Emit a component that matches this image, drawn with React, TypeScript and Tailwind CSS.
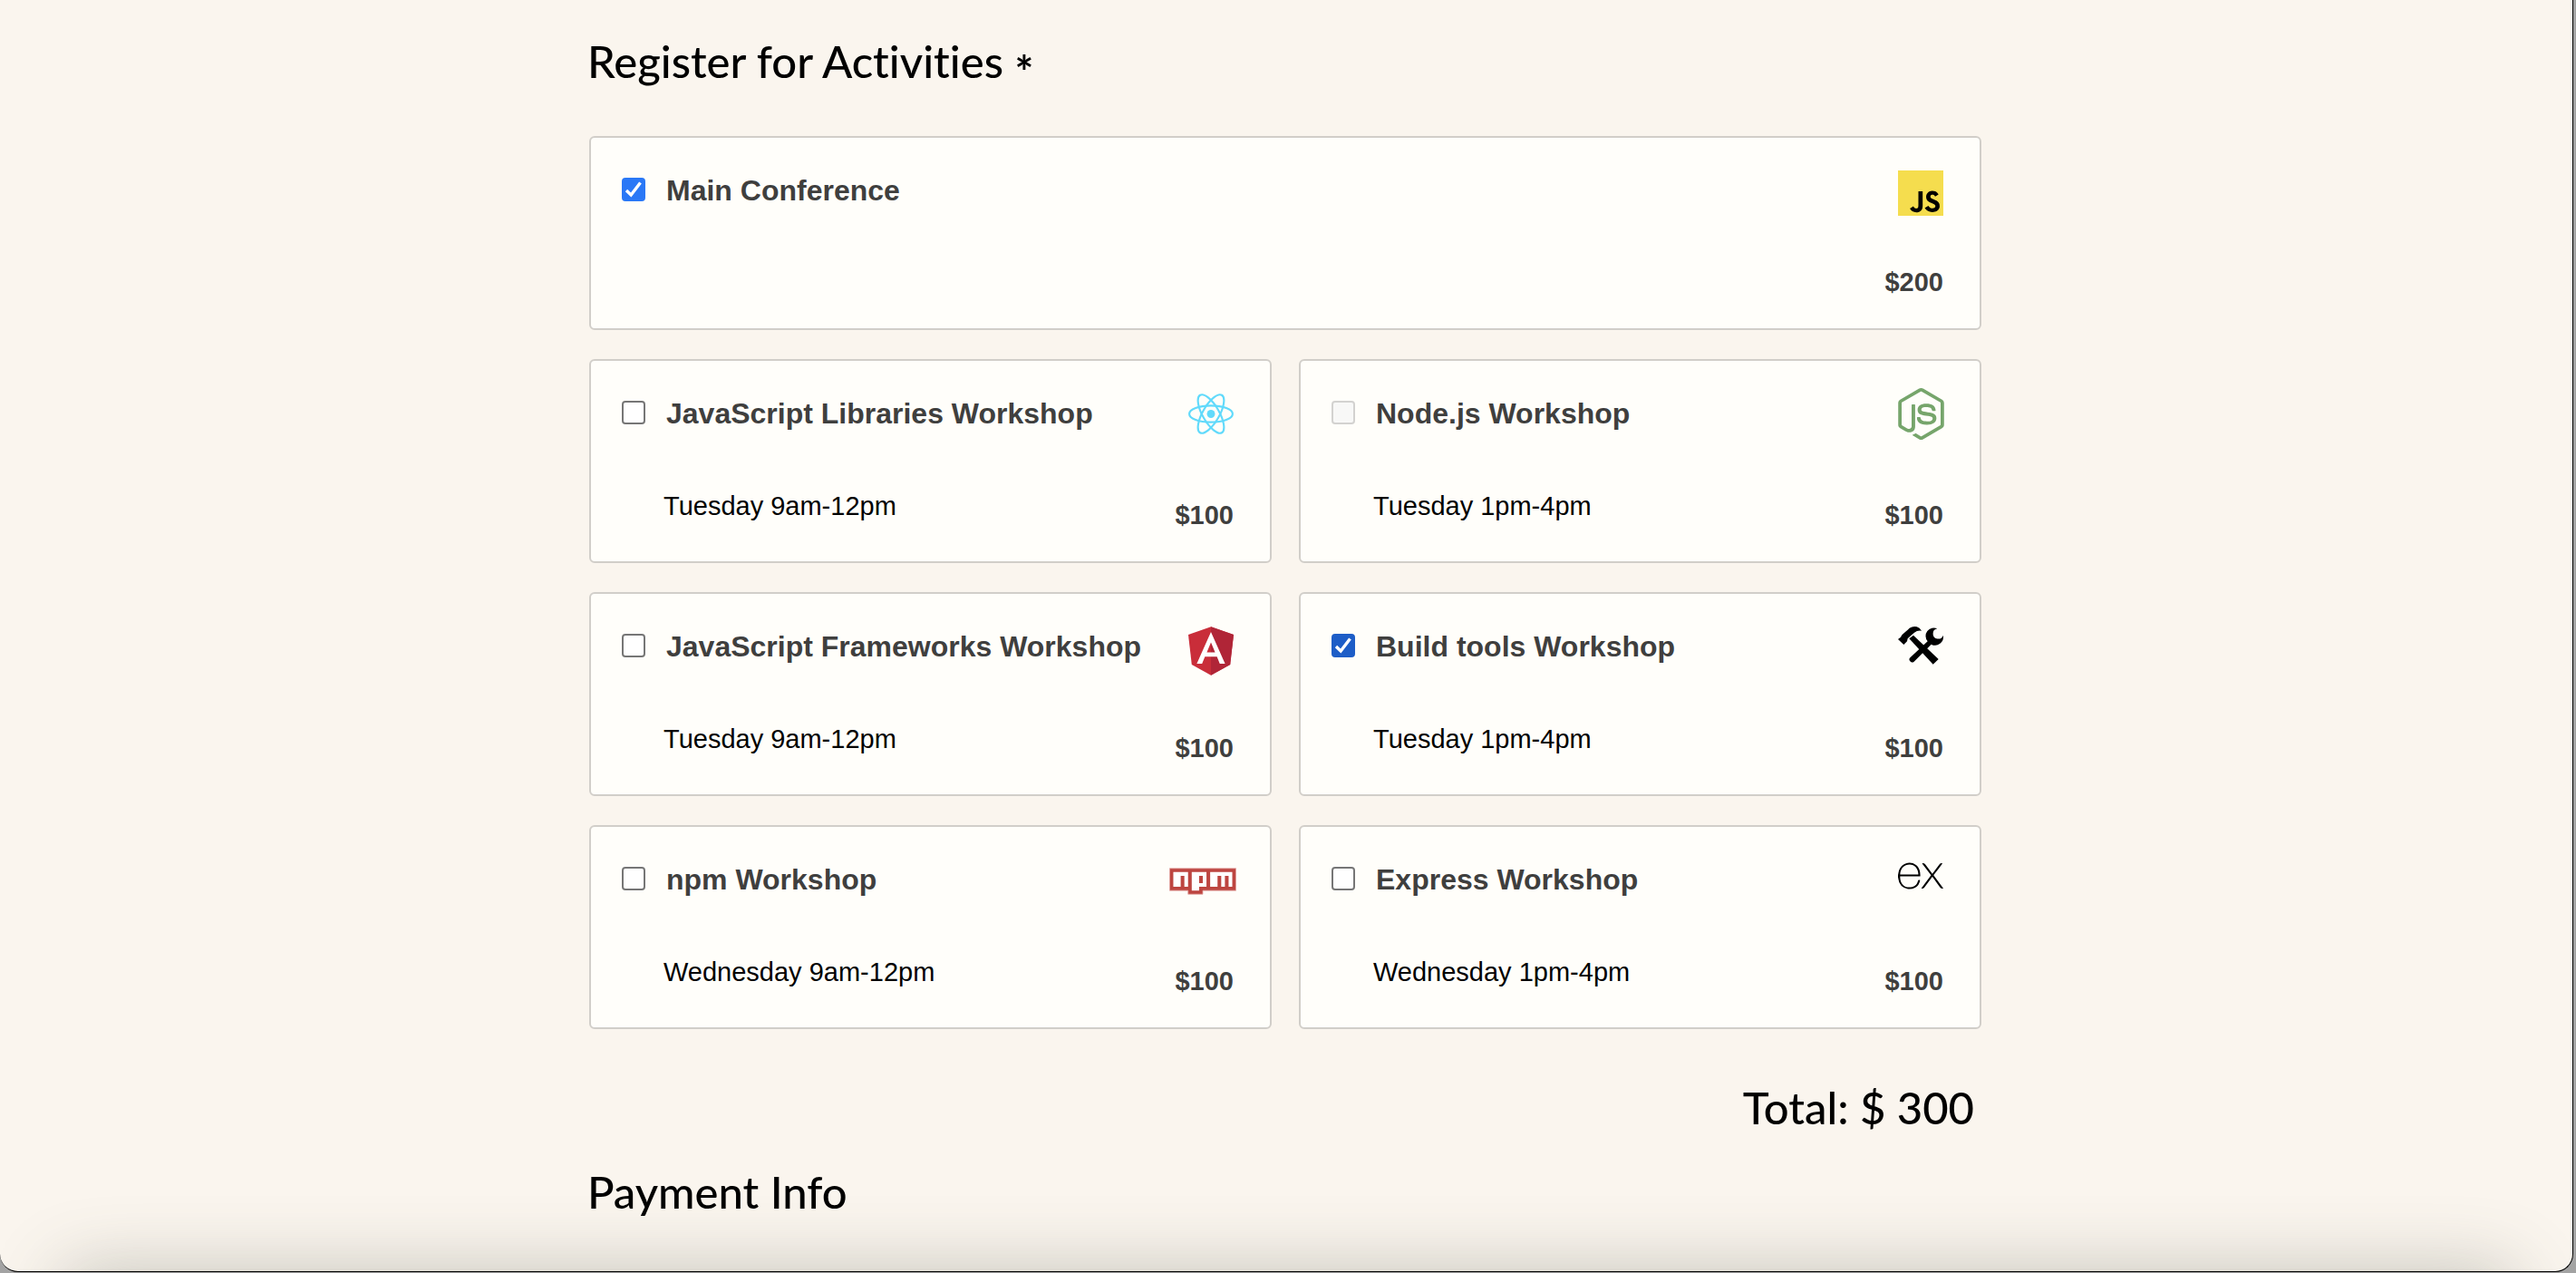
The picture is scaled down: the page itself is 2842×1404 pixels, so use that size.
import { useState, type ReactNode } from 'react';
import { SiExpress, SiJavascript, SiNodedotjs } from 'react-icons/si';

function IconBox({ children }: { children: ReactNode }) {
  return (
    <svg viewBox="0 0 50 64" className="h-16 w-[50px] shrink-0 overflow-visible" aria-hidden="true">
      {children}
    </svg>
  );
}

const JsIcon = () => (
  <IconBox>
    <rect x="3" y="10" width="46" height="44" fill="#000" />
    <SiJavascript x="0" y="6" size={50} color="#f5dd4e" />
  </IconBox>
);

const ReactIcon = () => (
  <IconBox>
    <svg x="0" y="6" width="50" height="45" viewBox="-11.5 -10.232 23 20.463">
      <circle r="2.05" fill="#61dafb" />
      <g fill="none" stroke="#61dafb" strokeWidth="1">
        <ellipse rx="11" ry="4.2" />
        <ellipse rx="11" ry="4.2" transform="rotate(60)" />
        <ellipse rx="11" ry="4.2" transform="rotate(120)" />
      </g>
    </svg>
  </IconBox>
);

const NodeIcon = () => (
  <IconBox>
    <SiNodedotjs x="-3" y="0" size={57} color="#76a56b" />
  </IconBox>
);

const AngularIcon = () => (
  <IconBox>
    <svg x="0" y="6" width="50" height="54" viewBox="31.9 30 186.2 200">
      <path d="M125 30L31.9 63.2l14.2 123.1L125 230l78.9-43.7 14.2-123.1z" fill="#c92d39" />
      <path d="M125 30v200l78.9-43.7 14.2-123.1z" fill="#b02537" />
      <path
        d="M125 52.1L66.8 182.6h21.7l11.7-29.2h49.4l11.7 29.2H183L125 52.1zm17 83.3h-34l17-40.9z"
        fill="#fff"
      />
    </svg>
  </IconBox>
);

const ToolsIcon = () => (
  <IconBox>
    <svg x="0" y="6" width="50" height="42" viewBox="0 0 150 126">
      <path d="M0 42L9 35L13 28L24 18L32 11L38 5Q50-2 62 1Q72 4 78 14Q64 12 54 20L46 27L32 40L30 49L19 60Z" />
      <path d="M37 40L51 29L134 108L116 125Z" />
      <path d="M130 7A27 27 0 0 0 98 49L41 102A9 9 0 0 0 53 116L110 59A27 27 0 0 0 149 29A17 17 0 1 1 130 7Z" />
    </svg>
  </IconBox>
);

const NpmIcon = () => (
  <IconBox>
    <svg x="-21" y="15" width="74" height="30" viewBox="-0.1 -0.1 18.2 7.2">
      <path d="M0 0h18v6H9v1H5V6H0z" fill="#bd4540" stroke="#e5a9a5" strokeWidth="0.2" />
      <path
        d="M1 5h2V2h1v3h1V1H1zM6 1v5h2V5h2V1zM8 2h1v2H8zM11 1v4h2V2h1v3h1V2h1v3h1V1z"
        fill="#fff"
        fillRule="evenodd"
      />
    </svg>
  </IconBox>
);

const ExpressIcon = () => (
  <IconBox>
    <SiExpress x="0" y="-1" size={50} color="#000" />
  </IconBox>
);

type Activity = {
  id: string;
  name: string;
  time?: string;
  cost: number;
  icon: ReactNode;
  checkedStyle?: string;
};

const ACTIVITIES: Activity[] = [
  { id: 'all', name: 'Main Conference', cost: 200, icon: <JsIcon /> },
  { id: 'js-libs', name: 'JavaScript Libraries Workshop', time: 'Tuesday 9am-12pm', cost: 100, icon: <ReactIcon /> },
  { id: 'node', name: 'Node.js Workshop', time: 'Tuesday 1pm-4pm', cost: 100, icon: <NodeIcon /> },
  { id: 'js-frameworks', name: 'JavaScript Frameworks Workshop', time: 'Tuesday 9am-12pm', cost: 100, icon: <AngularIcon /> },
  { id: 'build-tools', name: 'Build tools Workshop', time: 'Tuesday 1pm-4pm', cost: 100, icon: <ToolsIcon />, checkedStyle: 'checked:border-[#1d5dc7] checked:bg-[#1d5dc7]' },
  { id: 'npm', name: 'npm Workshop', time: 'Wednesday 9am-12pm', cost: 100, icon: <NpmIcon /> },
  { id: 'express', name: 'Express Workshop', time: 'Wednesday 1pm-4pm', cost: 100, icon: <ExpressIcon /> },
];

export default function App() {
  const [selected, setSelected] = useState<string[]>(['all', 'build-tools']);

  const toggle = (id: string) =>
    setSelected((prev) => (prev.includes(id) ? prev.filter((x) => x !== id) : [...prev, id]));

  const conflicts = (a: Activity) =>
    !!a.time && ACTIVITIES.some((b) => b.id !== a.id && b.time === a.time && selected.includes(b.id));

  const total = ACTIVITIES.filter((a) => selected.includes(a.id)).reduce((sum, a) => sum + a.cost, 0);

  return (
    <div className="flex min-h-screen bg-[#a3a3a3] pr-[3px] pb-px font-['Liberation_Sans',Arial,sans-serif]">
      <div className="relative flex-1 overflow-hidden rounded-b-[20px] border-r border-b border-black bg-[#faf5ee] pr-0.5">
        <form className="mx-auto max-w-[1540px] text-black">
          <fieldset>
            <legend className="pt-[39px] font-['Lato',sans-serif] text-[49px]/[56px] font-medium [font-variant-ligatures:none]">
              Register for Activities <span className="align-[-12px] leading-none font-bold">*</span>
            </legend>
            <div className="mt-[46px] grid grid-cols-2 gap-x-[30px] gap-y-8 px-0.5">
              {ACTIVITIES.map((a) => (
                <label
                  key={a.id}
                  className={`flex justify-between rounded-md border-2 border-[#d1cec9] bg-[#fffefa] pr-10 pl-[34px] ${a.time ? '' : 'col-span-2'}`}
                >
                  <span className="flex flex-col gap-[74px] pt-11 pb-[47px]">
                    <span className="flex gap-[23px]">
                      <span className="grid size-[26px]">
                        <input
                          type="checkbox"
                          name={a.id}
                          checked={selected.includes(a.id)}
                          disabled={conflicts(a)}
                          onChange={() => toggle(a.id)}
                          className={`peer col-start-1 row-start-1 size-[26px] appearance-none rounded border-2 border-[#767676] bg-white disabled:border-[#d3d2d0] disabled:bg-[#f8f8f7] ${a.checkedStyle ?? 'checked:border-[#2a78f6] checked:bg-[#2a78f6]'}`}
                        />
                        <svg
                          viewBox="0 0 26 26"
                          className="pointer-events-none invisible col-start-1 row-start-1 size-[26px] peer-checked:visible"
                          aria-hidden="true"
                        >
                          <path d="M5 14L10.200 19L20.500 5.500" fill="none" stroke="#fff" strokeWidth="3.400" />
                        </svg>
                      </span>
                      <span className="text-[32px]/7 font-bold text-[#3f3f3e]">{a.name}</span>
                    </span>
                    {a.time && <span className="pl-[46px] text-[29px]/7">{a.time}</span>}
                  </span>
                  <span className="flex flex-col items-end justify-between gap-[51px] pt-[30px] pb-[37px]">
                    {a.icon}
                    <span className="text-[29px]/7 font-bold text-[#3f3f3e]">${a.cost}</span>
                  </span>
                </label>
              ))}
            </div>
            <p className="mt-[58px] pr-2.5 text-right font-['Lato',sans-serif] text-[49px]/[56px] font-medium">
              Total: $ {total}
            </p>
          </fieldset>
          <fieldset className="mt-[37px] pb-14">
            <legend className="font-['Lato',sans-serif] text-[49px]/[56px] font-medium">Payment Info</legend>
          </fieldset>
        </form>
        <div className="pointer-events-none absolute top-full right-[66px] left-[70px] h-20 shadow-[0_0_80px_rgba(80,84,72,0.32)]" />
      </div>
    </div>
  );
}
